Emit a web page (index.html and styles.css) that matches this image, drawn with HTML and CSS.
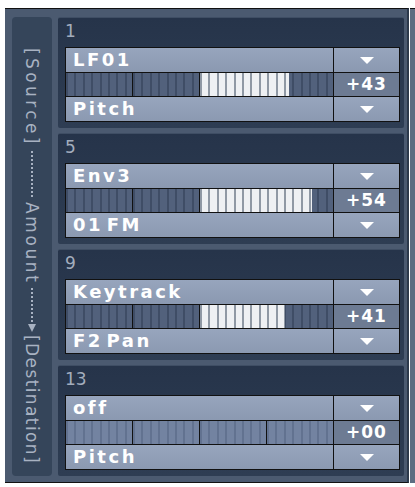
FILE: index.html
```html
<!DOCTYPE html>
<html lang="en">

<head>
    <meta charset="UTF-8">
    <title>Modulation Matrix</title>
    <link rel="stylesheet" href="styles.css">
</head>

<body>
    <div class="wrap">
        <div class="frame">
            <div class="labels">
                <span class="vtext source">[Source]</span>
                <div class="dots dots-a"></div>
                <span class="vtext amount">Amount</span>
                <div class="dots dots-b"></div>
                <div class="arrow"></div>
                <span class="vtext dest">[Destination]</span>
            </div>
            <div class="slots">
                <div class="slot">
                    <div class="num">1</div>
                    <div class="box">
                        <div class="cell name">LF01</div>
                        <div class="cell drop"><span class="tri"></span></div>
                        <div class="bar">
                            <div class="seg"></div><div class="seg"></div><div class="seg"></div><div class="seg"></div>
                            <div class="fill" style="width: 33.6%"></div>
                        </div>
                        <div class="cell value">+43</div>
                        <div class="cell name">Pitch</div>
                        <div class="cell drop"><span class="tri"></span></div>
                    </div>
                </div>
                <div class="slot">
                    <div class="num">5</div>
                    <div class="box">
                        <div class="cell name">Env3</div>
                        <div class="cell drop"><span class="tri"></span></div>
                        <div class="bar">
                            <div class="seg"></div><div class="seg"></div><div class="seg"></div><div class="seg"></div>
                            <div class="fill" style="width: 42.2%"></div>
                        </div>
                        <div class="cell value">+54</div>
                        <div class="cell name">01 FM</div>
                        <div class="cell drop"><span class="tri"></span></div>
                    </div>
                </div>
                <div class="slot">
                    <div class="num">9</div>
                    <div class="box">
                        <div class="cell name">Keytrack</div>
                        <div class="cell drop"><span class="tri"></span></div>
                        <div class="bar">
                            <div class="seg"></div><div class="seg"></div><div class="seg"></div><div class="seg"></div>
                            <div class="fill" style="width: 32%"></div>
                        </div>
                        <div class="cell value">+41</div>
                        <div class="cell name">F2 Pan</div>
                        <div class="cell drop"><span class="tri"></span></div>
                    </div>
                </div>
                <div class="slot off">
                    <div class="num">13</div>
                    <div class="box">
                        <div class="cell name">off</div>
                        <div class="cell drop"><span class="tri"></span></div>
                        <div class="bar">
                            <div class="seg"></div><div class="seg"></div><div class="seg"></div><div class="seg"></div>
                        </div>
                        <div class="cell value">+00</div>
                        <div class="cell name">Pitch</div>
                        <div class="cell drop"><span class="tri"></span></div>
                    </div>
                </div>
            </div>
        </div>
        <div class="next"></div>
    </div>
</body>

</html>
```

FILE: styles.css
```css
body {
    margin: 0;
    background: white;
    font-family: "DejaVu Sans", sans-serif;
}

.wrap {
    display: flex;
    padding: 8px 0 0 5px;
}

.frame {
    width: 404px;
    display: flex;
    gap: 6px;
    padding: 8px 3px 6px 7px;
    box-sizing: border-box;
    background: #4b5a70;
    border-top: 1px solid #111;
    border-bottom: 1px solid #111;
    border-right: 2px solid #2c394b;
}

.next {
    flex: 1;
    margin-left: 1px;
    background: #5d6c81;
    border-top: 1px solid #111;
}

/* left label column */
.labels {
    width: 42px;
    height: 459px;
    background: #35455a;
    border-radius: 4px;
    display: flex;
    flex-direction: column;
    align-items: center;
    padding-top: 31px;
    box-sizing: border-box;
    color: #a8b2c2;
}

.vtext {
    writing-mode: vertical-rl;
    font-size: 17px;
    letter-spacing: 2px;
    line-height: 20px;
}

.source {
    letter-spacing: 3.4px;
}

.amount {
    letter-spacing: 2.6px;
}

.dest {
    letter-spacing: 1.4px;
}

.dots {
    width: 2px;
    background: repeating-linear-gradient(180deg, #a8b2c2 0 2px, transparent 2px 4px);
}

.dots-a {
    height: 46px;
    margin: 4px 0 5px;
}

.dots-b {
    height: 34px;
    margin: 4px 0 2px;
}

.arrow {
    width: 0;
    height: 0;
    border-left: 4px solid transparent;
    border-right: 4px solid transparent;
    border-top: 8px solid #a8b2c2;
    margin-bottom: 3px;
}

/* slots */
.slots {
    display: flex;
    flex-direction: column;
    gap: 5px;
}

.slot {
    width: 346px;
    height: 111px;
    box-sizing: border-box;
    padding: 0 4px 6px 7px;
    background: linear-gradient(#26344a, #2e3d53);
    border-top: 1px solid #3f4e64;
    border-radius: 2px;
}

.num {
    height: 29px;
    padding-top: 3px;
    box-sizing: border-box;
    font-size: 17px;
    line-height: 20px;
    color: #a3adbd;
}

.box {
    display: grid;
    grid-template-columns: 267px 65px;
    grid-template-rows: 24px 23px 24px;
    gap: 1px;
    background: #111;
    border: 1px solid #111;
    width: 333px;
}

.cell {
    background: linear-gradient(#97a5bd, #8b99b1);
    color: white;
    font-weight: bold;
    font-size: 18px;
    line-height: 24px;
}

.name {
    padding-left: 7px;
    letter-spacing: 2.5px;
    word-spacing: -5px;
}

.drop {
    display: flex;
    justify-content: center;
    align-items: center;
}

.tri {
    width: 0;
    height: 0;
    border-left: 7px solid transparent;
    border-right: 7px solid transparent;
    border-top: 7px solid white;
}

.value {
    background: #6d7b93;
    text-align: center;
    font-size: 17px;
    line-height: 23px;
    letter-spacing: 1px;
}

/* bipolar amount bar */
.bar {
    position: relative;
    display: flex;
    gap: 1px;
    background: #111;
}

.seg {
    flex: 1;
    background: repeating-linear-gradient(90deg, #3f4d66 0 2px, #52617c 2px 8.4px);
}

.off .seg {
    background: repeating-linear-gradient(90deg, #627290 0 2px, #7383a1 2px 8.4px);
}

.fill {
    position: absolute;
    top: 0;
    bottom: 0;
    left: 50%;
    background: repeating-linear-gradient(90deg, #8f98a4 0 2px, #eef0f3 2px 8.4px);
}
```
